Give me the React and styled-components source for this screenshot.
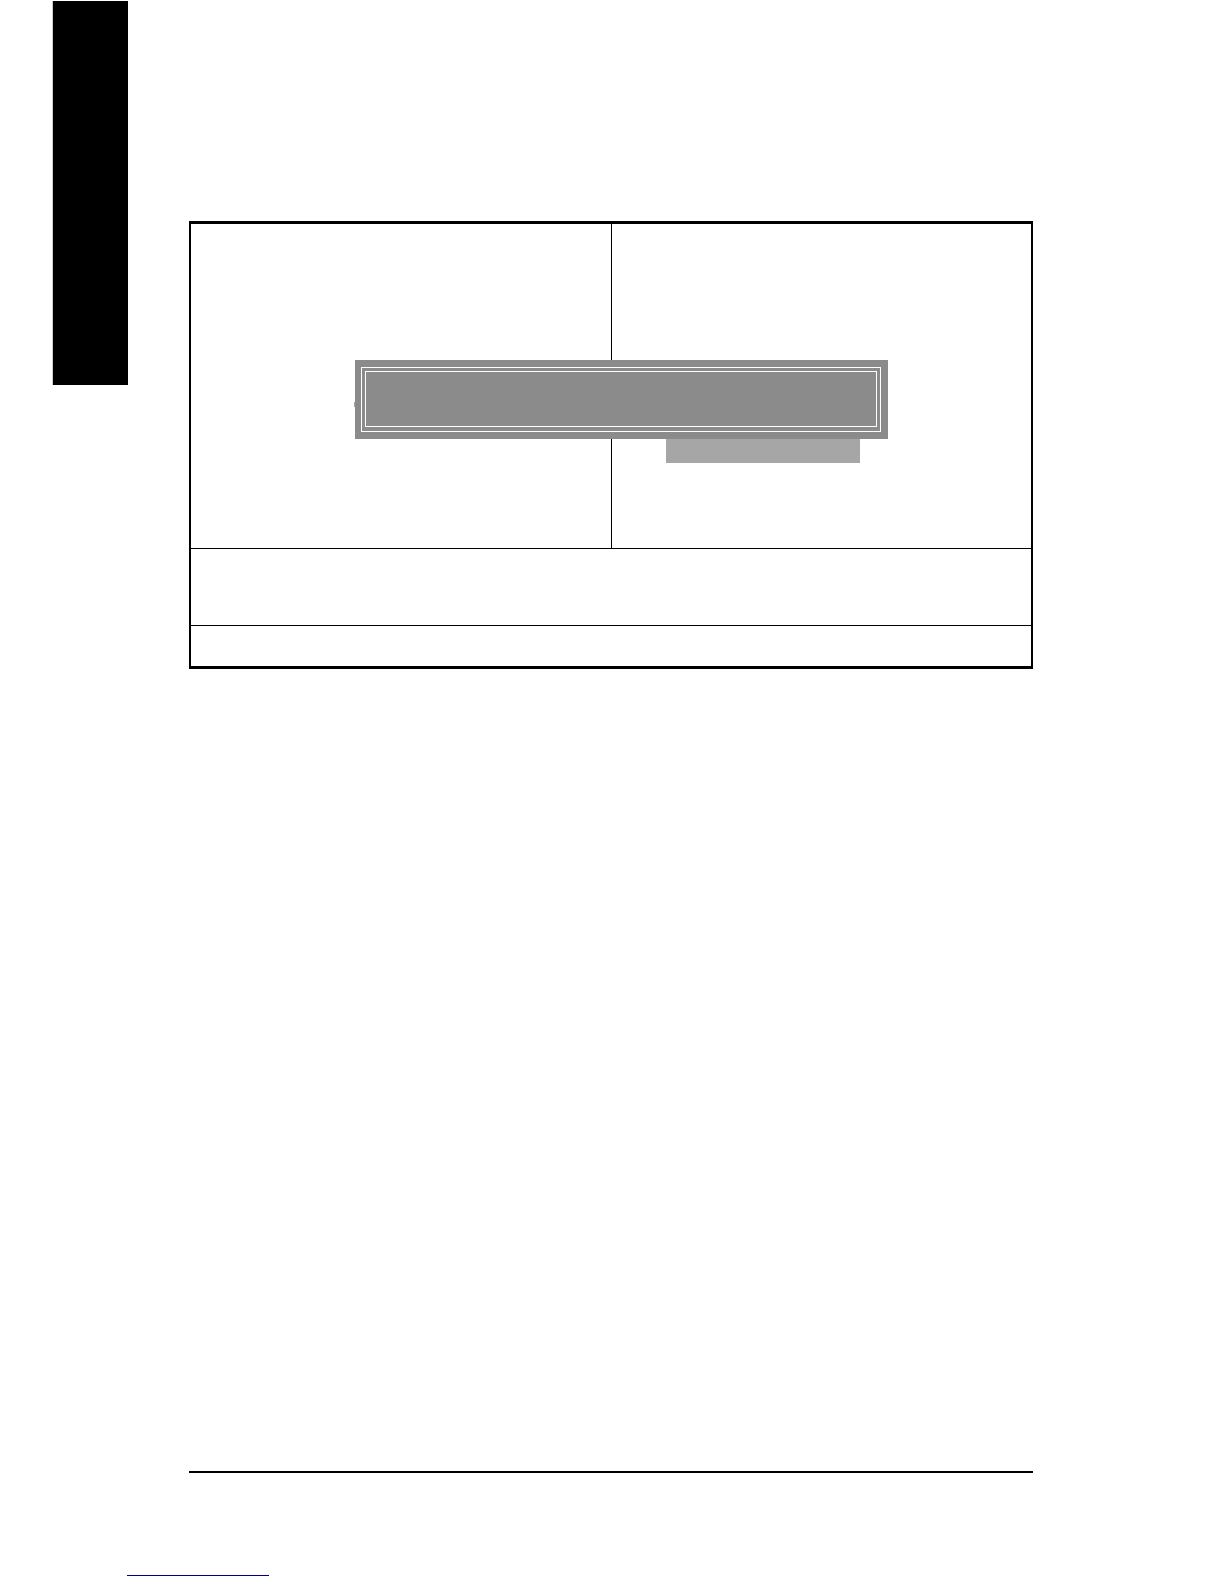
import React from 'react';
import styled, { createGlobalStyle } from 'styled-components';

const GlobalStyle = createGlobalStyle`
  * {
    box-sizing: border-box;
  }
  body {
    margin: 0;
    background: #fff;
    font-family: "Liberation Sans", Arial, sans-serif;
  }
`;

const Page = styled.div`
  display: flex;
  flex-direction: column;
  min-height: 100vh;
  padding-bottom: 8px;
`;

const Body = styled.div`
  display: flex;
  flex: 1;
  align-items: stretch;
`;

const ThumbTab = styled.aside`
  flex: none;
  align-self: flex-start;
  width: 76px;
  height: 384px;
  margin: 1px 61px 0 52px;
  background: #000;
  border-left: 1px solid #ccc;
`;

const Main = styled.main`
  display: flex;
  flex: 1;
  flex-direction: column;
  justify-content: space-between;
  padding: 221px 191px 0 0;
`;

const Frame = styled.section`
  position: relative;
  border: solid #000;
  border-width: 3px 2px;
`;

const Row = styled.div`
  display: flex;
  min-height: ${(props) => props.$height}px;

  & + & {
    border-top: 1px solid #000;
  }
`;

const Cell = styled.div`
  flex: 1;

  & + & {
    border-left: 1px solid #000;
  }
`;

// the gray panel lies over the divider of the first row
const Overlay = styled.div`
  position: absolute;
  top: 136px;
  left: 164px;
  right: 143px;
  display: flex;
  flex-direction: column;
`;

const Panel = styled.div`
  height: 79px;
  padding: 7px 7px 7px 6px;
  background: #8b8b8b;

  &::before {
    content: "";
    position: absolute;
    top: 42px;
    left: -1px;
    width: 1px;
    height: 5px;
    background: #a6a6a6;
  }
`;

const OuterLine = styled.div`
  height: 100%;
  padding: 3px 3px 4px;
  border: 1px solid #fff;
`;

const InnerLine = styled.div`
  height: 100%;
  border: 1px solid #fff;
`;

const Strip = styled.div`
  align-self: flex-end;
  width: 194px;
  height: 24px;
  margin-right: 28px;
  background: #a6a6a6;
`;

const FootRule = styled.hr`
  width: 100%;
  height: 2px;
  margin: 0;
  border: none;
  background: #000;
`;

const Footer = styled.footer`
  display: flex;
  align-items: flex-end;
  height: 103px;
  padding-left: 127px;
`;

const LinkLine = styled.div`
  width: 142px;
  border-bottom: 1px solid #000080;
`;

function App() {
  return (
    <>
      <GlobalStyle />
      <Page>
        <Body>
          <ThumbTab />
          <Main>
            <Frame>
              <Row $height={324}>
                <Cell />
                <Cell />
              </Row>
              <Row $height={77} />
              <Row $height={41} />
              <Overlay>
                <Panel>
                  <OuterLine>
                    <InnerLine />
                  </OuterLine>
                </Panel>
                <Strip />
              </Overlay>
            </Frame>
            <FootRule />
          </Main>
        </Body>
        <Footer>
          <LinkLine />
        </Footer>
      </Page>
    </>
  );
}

export default App;
